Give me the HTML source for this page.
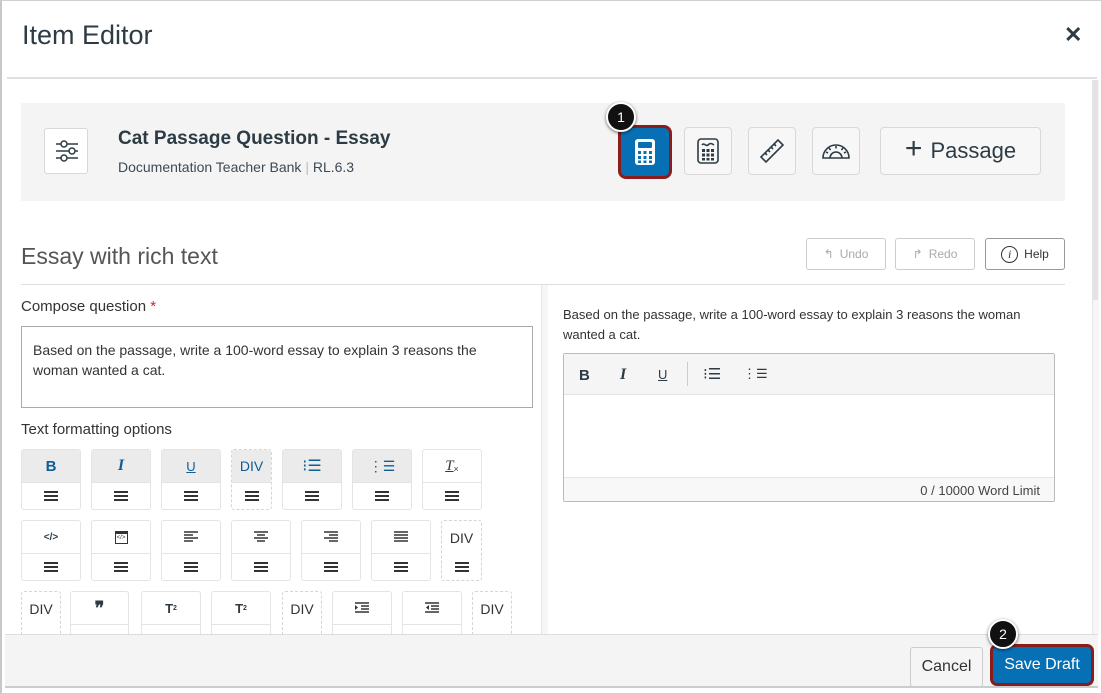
<!DOCTYPE html>
<html><head><meta charset="utf-8"><style>
*{box-sizing:border-box;margin:0;padding:0}
body{width:1102px;height:694px;background:#fff;font-family:"Liberation Sans",sans-serif;color:#2d3b45;position:relative;overflow:hidden}
.abs{position:absolute}
.tb{position:absolute;border:1px solid #e4e4e4;border-radius:3px;background:#fff}
.tb .top{height:33px;border-bottom:1px solid #e4e4e4;display:flex;align-items:center;justify-content:center;font-size:13px}
.tb.g .top{background:#ebebeb;color:#0e5d94}
.tb.d{border:1px dashed #d5d5d5}
.tb .bot{height:26px;display:flex;align-items:center;justify-content:center}
.hm{width:14px;height:10px;border-top:2px solid #333;border-bottom:2px solid #333;position:relative}
.hm:after{content:"";position:absolute;left:0;right:0;top:2px;height:2px;background:#333}
.ib{position:absolute;top:127px;width:48px;height:48px;border:1px solid #d8d8d8;border-radius:4px;background:#f7f7f7;display:flex;align-items:center;justify-content:center}
.btn{position:absolute;height:32px;border:1px solid #c7cdd1;border-radius:3px;background:#fff;font-size:12px;display:flex;align-items:center;justify-content:center;gap:6px}
.badge{position:absolute;width:30px;height:30px;border-radius:50%;background:#111;color:#fff;border:2px solid #fff;box-shadow:0 1px 3px rgba(0,0,0,.6);font-size:14px;display:flex;align-items:center;justify-content:center}
</style></head><body>
<div class="abs" style="left:0;top:0;width:1102px;height:694px;border:1px solid #d0d0d0;border-left:2px solid #c8c8c8"></div>
<div class="abs" style="left:22px;top:20px;font-size:27px;color:#2d3b45">Item Editor</div>
<div class="abs" style="left:1064px;top:22px;font-size:22px;font-weight:bold">✕</div>
<div class="abs" style="left:7px;top:77px;width:1090px;height:2px;background:#dde1e5"></div>
<div class="abs" style="left:1092px;top:80px;width:7px;height:554px;background:#f6f6f6;border-left:1px solid #e6e6e6"></div>
<div class="abs" style="left:1093px;top:80px;width:5px;height:220px;background:#e3e3e3"></div>
<div class="abs" style="left:21px;top:103px;width:1044px;height:98px;background:#f4f4f4"></div>
<div class="abs" style="left:44px;top:128px;width:44px;height:46px;border:1px solid #d8d8d8;border-radius:3px;background:#fff"></div>
<svg class="abs" style="left:55px;top:139px" width="24" height="24" viewBox="0 0 24 24" fill="none" stroke="#2d3b45" stroke-width="1.5"><path d="M1 5h5M12 5h11M1 12h13M20 12h3M1 19h5M12 19h11"/><circle cx="9" cy="5" r="3"/><circle cx="17" cy="12" r="3"/><circle cx="9" cy="19" r="3"/></svg>
<div class="abs" style="left:118px;top:128px;font-size:19px;font-weight:bold">Cat Passage Question - Essay</div>
<div class="abs" style="left:118px;top:159px;font-size:14px;color:#3d4a55">Documentation Teacher Bank <span style="color:#bbb">|</span> RL.6.3</div>
<div class="abs" style="left:618px;top:125px;width:54px;height:54px;border:3px solid #8a1c1c;border-radius:8px;background:#0770b4;display:flex;align-items:center;justify-content:center">
<svg width="22" height="28" viewBox="0 0 22 28"><rect x="1" y="1" width="20" height="26" rx="3" fill="#fff"/><rect x="4" y="4" width="14" height="6" rx="1" fill="#0770b4"/><g fill="#0770b4"><rect x="4" y="13" width="3" height="3"/><rect x="9.5" y="13" width="3" height="3"/><rect x="15" y="13" width="3" height="3"/><rect x="4" y="18" width="3" height="3"/><rect x="9.5" y="18" width="3" height="3"/><rect x="15" y="18" width="3" height="3"/><rect x="4" y="22.5" width="3" height="2.5"/><rect x="9.5" y="22.5" width="3" height="2.5"/><rect x="15" y="22.5" width="3" height="2.5"/></g></svg></div>
<div class="badge" style="left:606px;top:102px">1</div>
<div class="ib" style="left:684px"><svg width="22" height="26" viewBox="0 0 22 26" fill="none" stroke="#2d3b45" stroke-width="1.6"><rect x="1" y="1" width="20" height="24" rx="3"/><path d="M5 7c2-3 4 2 6 0s3-2 6 0"/><g fill="#2d3b45" stroke="none"><rect x="5" y="11" width="3" height="3"/><rect x="9.5" y="11" width="3" height="3"/><rect x="14" y="11" width="3" height="3"/><rect x="5" y="15.5" width="3" height="3"/><rect x="9.5" y="15.5" width="3" height="3"/><rect x="14" y="15.5" width="3" height="3"/><rect x="5" y="20" width="3" height="2.5"/><rect x="9.5" y="20" width="3" height="2.5"/><rect x="14" y="20" width="3" height="2.5"/></g></svg></div>
<div class="ib" style="left:748px"><svg width="26" height="26" viewBox="0 0 26 26" fill="none" stroke="#2d3b45" stroke-width="1.6"><path d="M2 19L19 2l5 5L7 24z"/><path d="M6 15l2 2M9 12l2 2M12 9l2 2M15 6l2 2"/></svg></div>
<div class="ib" style="left:812px"><svg width="28" height="16" viewBox="0 0 28 16" fill="none" stroke="#2d3b45" stroke-width="1.6"><path d="M1 15A13 13 0 0 1 27 15z"/><path d="M8 15a6 6 0 0 1 12 0"/><path d="M4 9l2 1M7 5l1.5 2M14 3v2.5M21 5l-1.5 2M24 9l-2 1"/></svg></div>
<div class="ib" style="left:880px;width:161px;font-size:22px;gap:8px;color:#2d3b45"><span style="font-size:30px;font-weight:300;margin-top:-4px">+</span> Passage</div>
<div class="abs" style="left:21px;top:243px;font-size:23px;color:#555">Essay with rich text</div>
<div class="btn" style="left:806px;top:238px;width:80px;color:#aaa;border-color:#ccc"><span>↰</span>Undo</div>
<div class="btn" style="left:895px;top:238px;width:80px;color:#aaa;border-color:#ccc"><span>↱</span>Redo</div>
<div class="btn" style="left:985px;top:238px;width:80px;color:#333;border-color:#999"><span style="width:17px;height:17px;border:1.5px solid #333;border-radius:50%;font-style:italic;font-family:'Liberation Serif';font-size:12px;display:flex;align-items:center;justify-content:center">i</span>Help</div>
<div class="abs" style="left:21px;top:284px;width:1044px;height:1px;background:#ddd"></div>
<div class="abs" style="left:541px;top:285px;width:7px;height:349px;background:#f6f6f6;border-left:1px solid #e6e6e6"></div>
<div class="abs" style="left:21px;top:298px;font-size:15px;color:#333">Compose question <span style="color:#d22">*</span></div>
<div class="abs" style="left:21px;top:326px;width:512px;height:82px;border:1px solid #aaa;padding:13px 11px;font-size:14px;line-height:20px;color:#333">Based on the passage, write a 100-word essay to explain 3 reasons the woman wanted a cat.</div>
<div class="abs" style="left:21px;top:421px;font-size:15px;color:#333">Text formatting options</div>

<div class="tb g" style="left:21px;top:449px;width:60px;height:61px"><div class="top"><b style="font-size:15px">B</b></div><div class="bot"><div class="hm"></div></div></div>
<div class="tb g" style="left:91px;top:449px;width:60px;height:61px"><div class="top"><i style="font-family:'Liberation Serif';font-weight:bold;font-size:16px">I</i></div><div class="bot"><div class="hm"></div></div></div>
<div class="tb g" style="left:161px;top:449px;width:60px;height:61px"><div class="top"><u style="font-size:13px">U</u></div><div class="bot"><div class="hm"></div></div></div>
<div class="tb g d" style="left:231px;top:449px;width:41px;height:61px"><div class="top" style="font-size:14px">DIV</div><div class="bot"><div class="hm"></div></div></div>
<div class="tb g" style="left:282px;top:449px;width:60px;height:61px"><div class="top" style="font-size:16px">⁝☰</div><div class="bot"><div class="hm"></div></div></div>
<div class="tb g" style="left:352px;top:449px;width:60px;height:61px"><div class="top" style="font-size:14px">⋮☰</div><div class="bot"><div class="hm"></div></div></div>
<div class="tb" style="left:422px;top:449px;width:60px;height:61px"><div class="top"><i style="font-family:'Liberation Serif';font-size:15px;text-decoration:underline">T</i><span style="font-size:9px;margin-top:6px">×</span></div><div class="bot"><div class="hm"></div></div></div>

<div class="tb" style="left:21px;top:520px;width:60px;height:61px"><div class="top" style="font-size:10px;font-weight:bold">&lt;/&gt;</div><div class="bot"><div class="hm"></div></div></div>
<div class="tb" style="left:91px;top:520px;width:60px;height:61px"><div class="top"><span style="width:13px;height:13px;border:1.5px solid #333;border-top-width:3px;font-size:6px;display:flex;align-items:center;justify-content:center">&lt;/&gt;</span></div><div class="bot"><div class="hm"></div></div></div>
<div class="tb" style="left:161px;top:520px;width:60px;height:61px"><div class="top"><svg width="14" height="12"><path d="M0 1h14M0 4h9M0 7h14M0 10h9" stroke="#333" stroke-width="1.5"/></svg></div><div class="bot"><div class="hm"></div></div></div>
<div class="tb" style="left:231px;top:520px;width:60px;height:61px"><div class="top"><svg width="14" height="12"><path d="M0 1h14M3 4h8M0 7h14M3 10h8" stroke="#333" stroke-width="1.5"/></svg></div><div class="bot"><div class="hm"></div></div></div>
<div class="tb" style="left:301px;top:520px;width:60px;height:61px"><div class="top"><svg width="14" height="12"><path d="M0 1h14M5 4h9M0 7h14M5 10h9" stroke="#333" stroke-width="1.5"/></svg></div><div class="bot"><div class="hm"></div></div></div>
<div class="tb" style="left:371px;top:520px;width:60px;height:61px"><div class="top"><svg width="14" height="12"><path d="M0 1h14M0 4h14M0 7h14M0 10h14" stroke="#333" stroke-width="1.5"/></svg></div><div class="bot"><div class="hm"></div></div></div>
<div class="tb d" style="left:441px;top:520px;width:41px;height:61px"><div class="top" style="border:none;font-size:14px;color:#333">DIV</div><div class="bot"><div class="hm"></div></div></div>

<div class="tb d" style="left:21px;top:591px;width:40px;height:61px"><div class="top" style="border:none;font-size:14px;color:#333">DIV</div></div>
<div class="tb" style="left:70px;top:591px;width:59px;height:61px"><div class="top" style="font-weight:bold;font-size:18px;font-family:'Liberation Serif'">❞</div></div>
<div class="tb" style="left:141px;top:591px;width:60px;height:61px"><div class="top" style="font-weight:bold">T<sup style="font-size:7px">2</sup></div></div>
<div class="tb" style="left:211px;top:591px;width:60px;height:61px"><div class="top" style="font-weight:bold">T<sub style="font-size:7px">2</sub></div></div>
<div class="tb d" style="left:282px;top:591px;width:40px;height:61px"><div class="top" style="border:none;font-size:14px;color:#333">DIV</div></div>
<div class="tb" style="left:332px;top:591px;width:60px;height:61px"><div class="top"><svg width="14" height="12"><path d="M0 1h14M6 4h8M6 7h8M0 10h14" stroke="#333" stroke-width="1.5"/><path d="M0 3l3 2.5L0 8z" fill="#333"/></svg></div></div>
<div class="tb" style="left:402px;top:591px;width:60px;height:61px"><div class="top"><svg width="14" height="12"><path d="M0 1h14M6 4h8M6 7h8M0 10h14" stroke="#333" stroke-width="1.5"/><path d="M4 3L1 5.5 4 8z" fill="#333"/></svg></div></div>
<div class="tb d" style="left:472px;top:591px;width:40px;height:61px"><div class="top" style="border:none;font-size:14px;color:#333">DIV</div></div>

<div class="abs" style="left:563px;top:305px;width:490px;font-size:13px;line-height:20px;color:#333">Based on the passage, write a 100-word essay to explain 3 reasons the woman wanted a cat.</div>
<div class="abs" style="left:563px;top:353px;width:492px;height:149px;border:1px solid #bbb;border-radius:2px">
<div style="height:41px;background:#f5f5f5;border-bottom:1px solid #e4e4e4;position:relative">
<b class="abs" style="left:15px;top:13px;font-size:15px">B</b>
<i class="abs" style="left:56px;top:12px;font-family:'Liberation Serif';font-weight:bold;font-size:16px">I</i>
<u class="abs" style="left:94px;top:13px;font-size:13px">U</u>
<div class="abs" style="left:123px;top:8px;width:1px;height:24px;background:#ccc"></div>
<div class="abs" style="left:139px;top:11px;font-size:15px">⁝☰</div>
<div class="abs" style="left:179px;top:12px;font-size:13px">⋮☰</div>
</div>
<div style="height:82px"></div>
<div style="height:24px;background:#f8f8f8;border-top:1px solid #e4e4e4;text-align:right;padding:5px 14px 0 0;font-size:13px;color:#444">0 / 10000 Word Limit</div>
</div>
<div class="abs" style="left:5px;top:634px;width:1093px;height:53px;background:#f4f4f4;border-top:1px solid #ddd"></div>
<div class="abs" style="left:5px;top:686px;width:1093px;height:2px;background:#ccc"></div>
<div class="btn" style="left:910px;top:647px;width:73px;height:40px;font-size:16px;background:#f5f5f5;border-color:#ccc;color:#333">Cancel</div>
<div class="abs" style="left:990px;top:644px;width:104px;height:42px;border:3px solid #8a1c1c;border-radius:7px;background:#0770b4;color:#fff;font-size:16px;display:flex;align-items:center;justify-content:center">Save Draft</div>
<div class="badge" style="left:988px;top:619px">2</div>
</body></html>
